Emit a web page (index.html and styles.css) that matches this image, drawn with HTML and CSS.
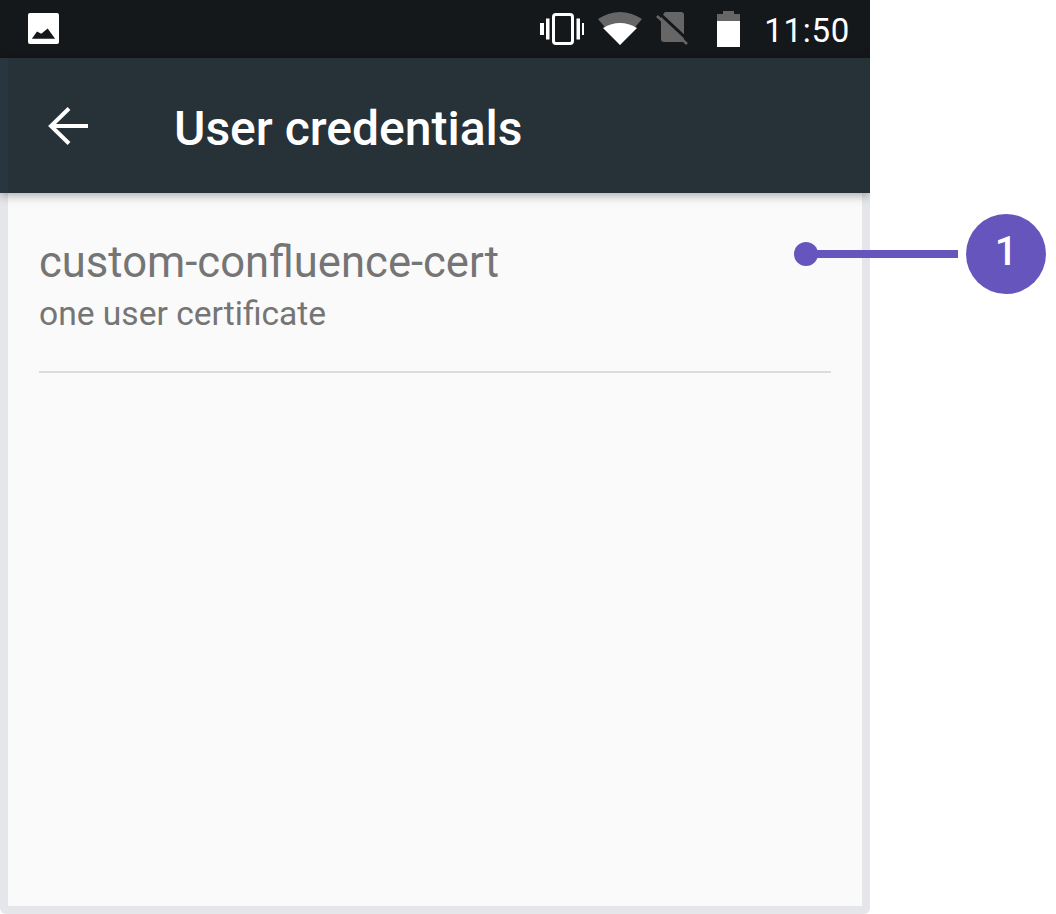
FILE: index.html
```html
<!DOCTYPE html>
<html lang="en">
<head>
  <meta charset="UTF-8">
  <title>User credentials</title>
  <link rel="stylesheet" href="styles.css">
</head>
<body>
  <div class="phone">
    <div class="status-bar">
      <svg class="icon-picture" viewBox="0 0 32 32">
        <path fill="#fff" fill-rule="evenodd" d="M2 0h28a2 2 0 0 1 2 2v28a2 2 0 0 1-2 2H2a2 2 0 0 1-2-2V2a2 2 0 0 1 2-2zM4 26.500h24l-7.700-10.500-6.600 5.300-4.400-2.300z"/>
      </svg>
      <div class="status-icons">
        <svg class="icon-vibrate" viewBox="0 0 44 34">
          <rect x="13.500" y="2.500" width="19" height="29" rx="2.500" fill="none" stroke="#fff" stroke-width="3"/>
          <path fill="#fff" d="M0 11h4v12H0zM6 6.500h3.500v21H6zM36.500 6.500H40v21h-3.500zM42 11h2v12h-2z"/>
        </svg>
        <svg class="icon-wifi" viewBox="0 0 44 34">
          <path fill="#666" d="M0 7Q22-7 44 7L22 33z"/>
          <path fill="#fff" d="M5 16Q22 6 39 16L22 33z"/>
        </svg>
        <svg class="icon-sim" viewBox="0 0 32 34">
          <path fill="#666" d="M9 0h16a3 3 0 0 1 3 3v27H8a3 3 0 0 1-3-3V5z"/>
          <path stroke="#14181b" stroke-width="3" d="M3 1l30 28"/>
          <path stroke="#666" stroke-width="2.500" d="M1 4l30 28"/>
        </svg>
        <svg class="icon-battery" viewBox="0 0 23 36">
          <path fill="#666" d="M6 0h11v3h6v8H0V3h6z"/>
          <path fill="#fff" d="M0 10h23v26H0z"/>
        </svg>
        <span class="clock">11:50</span>
      </div>
    </div>

    <div class="toolbar">
      <svg class="icon-back" viewBox="0 0 40 38">
        <path fill="none" stroke="#fff" stroke-width="4" d="M40 19H3M21 1.500L3 19l18 17.500"/>
      </svg>
      <h1 class="toolbar-title">User credentials</h1>
    </div>

    <div class="content">
      <div class="cred-item">
        <div class="cred-name">custom-confluence-cert</div>
        <div class="cred-detail">one user certificate</div>
      </div>
    </div>
  </div>

  <div class="callout">
    <span class="callout-dot"></span>
    <span class="callout-line"></span>
    <span class="callout-badge">1</span>
  </div>
</body>
</html>
```

FILE: styles.css
```css
html, body { margin: 0; padding: 0; background: #fff; }
body { position: relative; width: 1056px; height: 914px; overflow: hidden; font-family: Roboto, sans-serif; }

.phone { display: flex; flex-direction: column; width: 870px; height: 914px; overflow: hidden; border-radius: 0 0 6px 6px; background: #e5e6ea; }

.status-bar { display: flex; align-items: center; justify-content: space-between; flex: 0 0 58px; padding: 0 20px 0 28px; background: #14181b; }
.icon-picture { width: 31px; height: 31px; margin-top: -1px; }
.status-icons { display: flex; align-items: center; }
.icon-vibrate { width: 44px; height: 34px; }
.icon-wifi { width: 44px; height: 34px; margin-left: 14px; margin-top: -1px; }
.icon-sim { width: 32px; height: 34px; margin-left: 14px; }
.icon-battery { width: 23px; height: 36px; margin-left: 29px; }
.clock { margin: 2px 0 0 24px; color: #fff; font-size: 33px; letter-spacing: 0.7px; }

.toolbar { position: relative; z-index: 1; display: flex; align-items: center; flex: 0 0 135px; box-sizing: border-box; padding-left: 40px; border-left: 8px solid #283640; background: #263238; box-shadow: 0 2px 10px rgba(0,0,0,0.35); }
.icon-back { width: 40px; height: 38px; }
.toolbar-title { margin: 6px 0 0 86px; color: #fff; font-size: 48px; font-weight: 500; }

.content { flex: 1; margin: 0 8px 8px; padding: 0 31px; background: #fafafa; }
.cred-item { height: 180px; box-sizing: border-box; padding-top: 43px; border-bottom: 2px solid #dcdcdc; }
.cred-name { color: #757575; font-size: 43.600px; line-height: 54px; }
.cred-detail { color: #757575; font-size: 33.600px; line-height: 48px; }

/* annotation on top of the screenshot */
.callout { position: absolute; left: 794px; top: 214px; width: 252px; height: 80px; }
.callout-dot { position: absolute; left: 0; top: 28px; width: 24px; height: 24px; border-radius: 50%; background: #6655bd; }
.callout-line { position: absolute; left: 12px; top: 36px; width: 152px; height: 8px; background: #6655bd; }
.callout-badge { position: absolute; left: 172px; top: 0; width: 80px; height: 80px; border-radius: 50%; background: #6655bd; color: #fff; font-size: 40px; font-weight: 500; line-height: 76px; text-align: center; }
```
